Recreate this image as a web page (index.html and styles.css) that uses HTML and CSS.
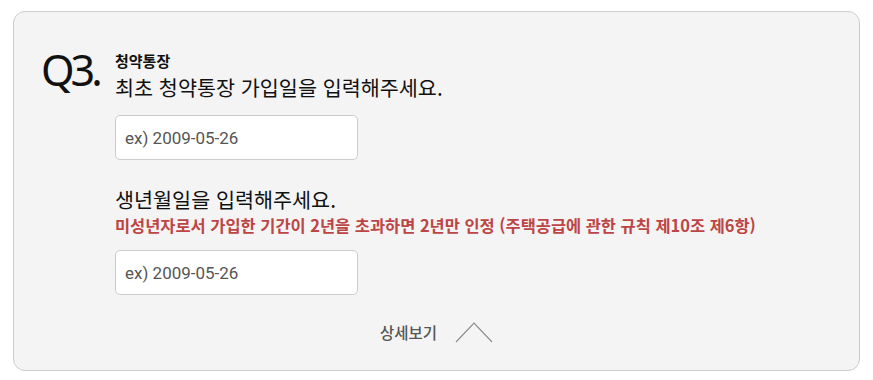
FILE: index.html
```html
<!DOCTYPE html>
<html lang="ko">
<head>
    <meta charset="UTF-8">
    <title>청약통장</title>
    <link rel="stylesheet" href="styles.css">
</head>
<body>
    <div class="question-card">
        <div class="question">
            <div class="q-number">Q3.</div>
            <div class="q-body">
                <div class="q-category">청약통장</div>
                <div class="q-title">최초 청약통장 가입일을 입력해주세요.</div>
                <input class="date-input" type="text" placeholder="ex) 2009-05-26">

                <div class="q-title second">생년월일을 입력해주세요.</div>
                <div class="q-notice">미성년자로서 가입한 기간이 2년을 초과하면 2년만 인정 (주택공급에 관한 규칙 제10조 제6항)</div>
                <input class="date-input" type="text" placeholder="ex) 2009-05-26">
            </div>
        </div>

        <div class="detail-row">
            <button class="detail-toggle">
                <span>상세보기</span>
                <svg width="38" height="22" viewBox="0 0 38 22">
                    <polyline points="1,21 19,2 37,21" fill="none" stroke="#8a8a8a" stroke-width="1.1"/>
                </svg>
            </button>
        </div>
    </div>
</body>
</html>
```

FILE: styles.css
```css
* {
    margin: 0;
    padding: 0;
    box-sizing: border-box;
}

body {
    background: #fff;
    font-family: 'Noto Sans CJK KR', 'Noto Sans', sans-serif;
    color: #111;
    padding: 11px 13px;
}

.question-card {
    width: 847px;
    height: 360px;
    background: #f4f4f4;
    border: 1px solid #cccccc;
    border-radius: 12px;
    padding-top: 39px;
}

.question {
    display: flex;
    gap: 16px;
    padding-left: 27px;
}

.q-number {
    font-family: 'Noto Sans', sans-serif;
    font-weight: 400;
    font-size: 43px;
    line-height: 44px;
    letter-spacing: -4px;
    margin-top: -3px;
    width: 58px;
    color: #111;
}

.q-category {
    font-size: 15px;
    font-weight: 700;
    line-height: 20px;
}

.q-title {
    font-size: 20.7px;
    line-height: 28px;
    margin-top: 2px;
}

.q-title.second {
    margin-top: 25px;
}

.q-notice {
    color: #bd4545;
    font-size: 16.45px;
    font-weight: 700;
    line-height: 24px;
}

.date-input {
    display: block;
    width: 243px;
    height: 45px;
    margin-top: 14px;
    padding: 0 9px;
    border: 1px solid #cccccc;
    border-radius: 5px;
    background: #fff;
    font-family: 'Roboto', 'Noto Sans CJK KR', sans-serif;
    font-size: 17px;
}

.date-input::placeholder {
    color: #555;
}

.q-notice + .date-input {
    margin-top: 13px;
}

.detail-row {
    display: flex;
    justify-content: center;
    margin-top: 26px;
}

.detail-toggle {
    display: flex;
    align-items: center;
    gap: 18px;
    padding: 0;
    background: none;
    border: none;
    font-family: 'Noto Sans CJK KR', sans-serif;
    font-size: 15.5px;
    font-weight: 500;
    color: #555;
    cursor: pointer;
}
```
